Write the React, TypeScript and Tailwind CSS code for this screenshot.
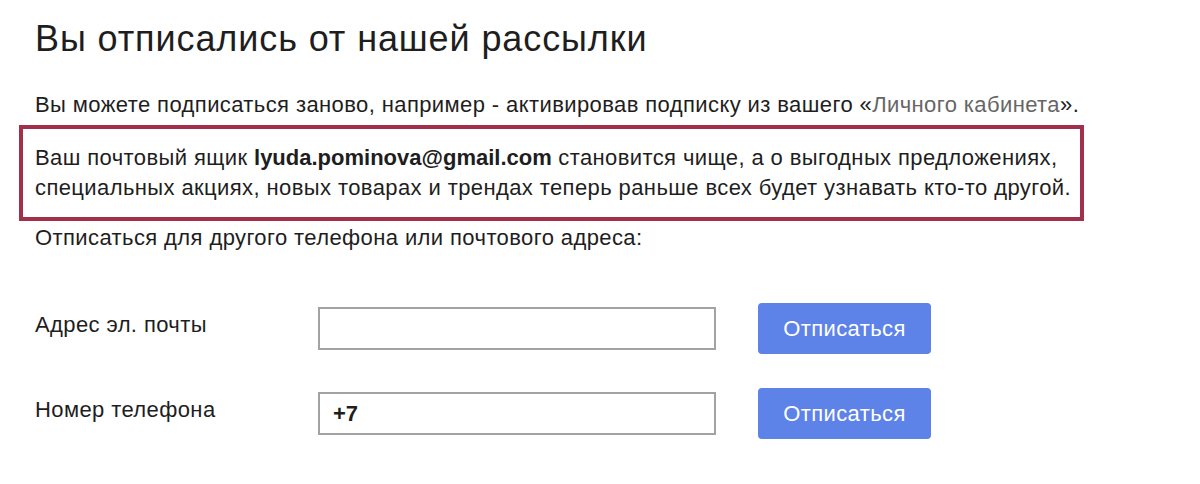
import React, { useState } from 'react';

function UnsubscribeRow({
  label,
  value,
  onChange,
}: {
  label: string;
  value: string;
  onChange: (v: string) => void;
}) {
  return (
    <div className="flex h-[51px] items-center">
      <label className="w-[283px] -mt-[8px] text-[22px] leading-[30px] tracking-[0.4px]">{label}</label>
      <input
        type="text"
        value={value}
        onChange={(e) => onChange(e.target.value)}
        className="h-[43px] w-[398px] border-2 border-[#a3a3a3] bg-white px-[13px] text-[22px] font-bold text-[#1e1e1e] outline-none"
      />
      <button
        type="button"
        className="ml-[42px] h-[51px] w-[173px] rounded-[4px] bg-[#5d82e8] text-[22px] tracking-[0.4px] text-white"
      >
        Отписаться
      </button>
    </div>
  );
}

export default function App() {
  const [email, setEmail] = useState('');
  const [phone, setPhone] = useState('+7');

  return (
    <div
      className="min-h-screen bg-white pl-[35px] pt-[19px] text-[#1e1e1e]"
      style={{ fontFamily: '"Liberation Sans", Arial, sans-serif' }}
    >
      <h1 className="text-[36px] leading-[40px] tracking-[0.9px]">Вы отписались от нашей рассылки</h1>

      <div className="text-[22px] leading-[30px] tracking-[0.4px]">
        <p className="mt-[31px]">
          Вы можете подписаться заново, например - активировав подписку из вашего «
          <a href="#" className="text-[#666666]">
            Личного кабинета
          </a>
          ».
        </p>

        <div className="-ml-4 mt-[5px] w-[1065px] border-4 border-[#a3304b] py-[14px] pl-3">
          Ваш почтовый ящик <b className="tracking-normal">lyuda.pominova@gmail.com</b> становится чище, а о выгодных предложениях,
          <br />
          специальных акциях, новых товарах и трендах теперь раньше всех будет узнавать кто-то другой.
        </div>

        <p className="mt-[2px]">Отписаться для другого телефона или почтового адреса:</p>
      </div>

      <div className="mt-[50px] flex flex-col gap-[34px]">
        <UnsubscribeRow label="Адрес эл. почты" value={email} onChange={setEmail} />
        <UnsubscribeRow label="Номер телефона" value={phone} onChange={setPhone} />
      </div>
    </div>
  );
}
